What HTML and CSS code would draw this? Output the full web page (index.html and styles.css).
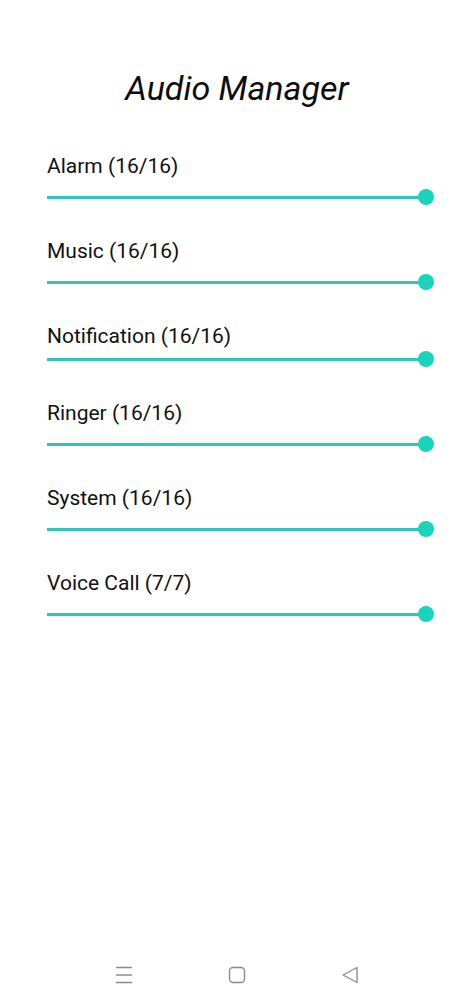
FILE: index.html
```html
<!DOCTYPE html>
<html lang="en">
<head>
<meta charset="utf-8">
<title>Audio Manager</title>
<link rel="stylesheet" href="styles.css">
</head>
<body>
<div class="screen">
  <h1 class="title">Audio Manager</h1>
  <div class="list">
    <div class="row">
      <div class="label">Alarm (16/16)</div>
      <div class="slider"><div class="track"></div><div class="thumb"></div></div>
    </div>
    <div class="row">
      <div class="label">Music (16/16)</div>
      <div class="slider"><div class="track"></div><div class="thumb"></div></div>
    </div>
    <div class="row row-tight">
      <div class="label">Notification (16/16)</div>
      <div class="slider"><div class="track"></div><div class="thumb"></div></div>
    </div>
    <div class="row">
      <div class="label">Ringer (16/16)</div>
      <div class="slider"><div class="track"></div><div class="thumb"></div></div>
    </div>
    <div class="row">
      <div class="label">System (16/16)</div>
      <div class="slider"><div class="track"></div><div class="thumb"></div></div>
    </div>
    <div class="row">
      <div class="label">Voice Call (7/7)</div>
      <div class="slider"><div class="track"></div><div class="thumb"></div></div>
    </div>
  </div>
  <nav class="navbar">
    <svg class="nav-icon" width="18" height="18" viewBox="0 0 18 18" fill="none" stroke="#8c8c8c" stroke-width="1.4" stroke-linecap="round">
      <line x1="1.5" y1="1.5" x2="16.5" y2="1.5"/>
      <line x1="1.5" y1="9" x2="16.5" y2="9"/>
      <line x1="1.5" y1="16.5" x2="16.5" y2="16.5"/>
    </svg>
    <svg class="nav-icon" width="18" height="18" viewBox="0 0 18 18" fill="none" stroke="#8c8c8c" stroke-width="1.4">
      <rect x="1.5" y="1.5" width="15" height="15" rx="3.5"/>
    </svg>
    <svg class="nav-icon" width="18" height="18" viewBox="0 0 18 18" fill="none" stroke="#8c8c8c" stroke-width="1.4" stroke-linejoin="round">
      <path d="M16 1.5 L2 9 L16 16.5 Z"/>
    </svg>
  </nav>
</div>
</body>
</html>
```
FILE: styles.css
```css
html, body {
  margin: 0;
  padding: 0;
  background: #ffffff;
}

.screen {
  width: 474px;
  height: 1004px;
  display: flex;
  flex-direction: column;
  font-family: Roboto, "Liberation Sans", sans-serif;
  color: #111111;
}

.title {
  margin: 0;
  padding-top: 68px;
  font-size: 34px;
  line-height: 40px;
  font-style: italic;
  font-weight: 400;
  text-align: center;
  color: #0d0d0d;
}

.list {
  margin-top: 46px;
  padding: 0 40px 0 47px;
  display: flex;
  flex-direction: column;
  gap: 34px;
}

.row {
  display: flex;
  flex-direction: column;
}

.label {
  font-size: 21px;
  line-height: 24px;
  color: #111111;
}

.slider {
  margin-top: 11px;
  height: 16px;
  display: flex;
  align-items: center;
}

.row-tight .slider {
  margin-top: 3px;
}

.track {
  flex: 1;
  height: 3px;
  background: #2fc6b9;
}

.thumb {
  width: 16px;
  height: 16px;
  margin-left: -8px;
  border-radius: 50%;
  background: #19d3bd;
}

.navbar {
  margin-top: auto;
  height: 58px;
  display: flex;
  justify-content: center;
  align-items: center;
  gap: 95px;
}

.nav-icon {
  display: block;
}
```
